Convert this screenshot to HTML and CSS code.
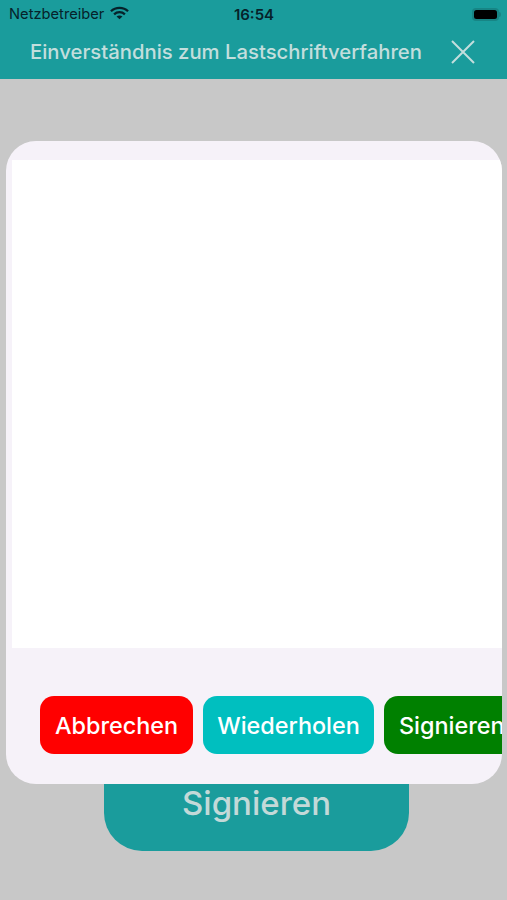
FILE: index.html
```html
<!DOCTYPE html>
<html lang="de">
<head>
<meta charset="utf-8">
<title>Einverständnis zum Lastschriftverfahren</title>
<link rel="stylesheet" href="styles.css">
</head>
<body>
<div class="screen">
  <header class="header">
    <div class="status">
      <div class="status-left">
        <span>Netzbetreiber</span>
        <svg class="wifi" viewBox="0 0 20 14" width="19" height="14"><path d="M1 5.2C6 .4 14 .4 19 5.2" fill="none" stroke="#06222a" stroke-width="2.4"/><path d="M4.3 8.4c3.2-3 8.2-3 11.4 0" fill="none" stroke="#06222a" stroke-width="2.4"/><path d="M10 13.6 6.9 10.7c1.8-1.5 4.4-1.5 6.2 0z" fill="#06222a"/></svg>
      </div>
      <span class="clock">16:54</span>
      <div class="battery"><span class="battery-fill"></span><span class="battery-nub"></span></div>
    </div>
    <div class="titlebar">
      <h1 class="title">Einverständnis zum Lastschriftverfahren</h1>
      <svg class="close" viewBox="0 0 24 24" width="24" height="24"><path d="M1 1 23 23M23 1 1 23" fill="none" stroke="#c3dedd" stroke-width="2"/></svg>
    </div>
  </header>
  <main class="content">
    <button class="sign-main">Signieren</button>
  </main>
  <section class="sheet">
    <div class="canvas"></div>
    <div class="actions">
      <button class="action red">Abbrechen</button>
      <button class="action cyan">Wiederholen</button>
      <button class="action green">Signieren</button>
    </div>
  </section>
</div>
</body>
</html>
```
FILE: styles.css
```css
* { box-sizing: border-box; }
html, body { margin: 0; padding: 0; }
body { font-family: Inter, "Liberation Sans", sans-serif; }
.screen {
  position: relative;
  width: 507px;
  height: 900px;
  overflow: hidden;
  background: #c8c8c8;
  display: flex;
  flex-direction: column;
}
.header { height: 79px; background: #1a9c9c; flex: none; }
.status {
  height: 28px;
  padding: 0 8px 0 9px;
  display: grid;
  grid-template-columns: 1fr auto 1fr;
  align-items: center;
  color: #06222a;
  font-size: 14.7px;
}
.status-left { display: flex; align-items: center; gap: 6px; }
.wifi { margin-top: -2px; }
.clock { font-weight: 600; font-size: 15px; }
.battery {
  justify-self: end;
  position: relative;
  width: 27px;
  height: 13px;
  padding: 2px;
  border-radius: 4px;
  background: #178585;
}
.battery-fill { display: block; width: 100%; height: 100%; background: #000; border-radius: 2.5px; }
.battery-nub {
  position: absolute;
  right: -2px;
  top: 4px;
  width: 2px;
  height: 5px;
  border-radius: 0 2px 2px 0;
  background: #178585;
}
.titlebar {
  height: 49px;
  padding: 0 32px 2px 30px;
  display: flex;
  align-items: center;
  justify-content: space-between;
}
.title { margin: 0; font-size: 20.3px; font-weight: 500; color: #c3dedd; white-space: nowrap; }
.content { flex: 1; display: flex; flex-direction: column; align-items: center; padding-top: 672px; }
.sign-main {
  width: 305px;
  height: 100px;
  margin-left: 6px;
  padding: 32px 0 0;
  border: 0;
  border-radius: 0 0 38px 38px;
  background: #1a9c9c;
  color: #c3d9d8;
  font: 500 33px Inter, "Liberation Sans", sans-serif;
  display: flex;
  justify-content: center;
  align-items: flex-start;
}
.sheet {
  position: absolute;
  left: 6px;
  top: 141px;
  width: 496px;
  height: 643px;
  padding-top: 19px;
  border-radius: 30px;
  overflow: hidden;
  background: #f6f2f9;
}
.canvas { height: 488px; margin-left: 6px; background: #fff; }
.actions { display: flex; gap: 10px; padding: 48px 0 0 34px; }
.action {
  flex: none;
  height: 58px;
  border: 0;
  border-radius: 14px;
  color: #fff;
  font: 500 23.4px Inter, "Liberation Sans", sans-serif;
}
.red { width: 153px; background: #ff0000; }
.cyan { width: 171px; background: #00bfbf; }
.green { width: 132px; background: #008000; padding: 0 0 0 15px; text-align: left; white-space: nowrap; overflow: hidden; }
```
